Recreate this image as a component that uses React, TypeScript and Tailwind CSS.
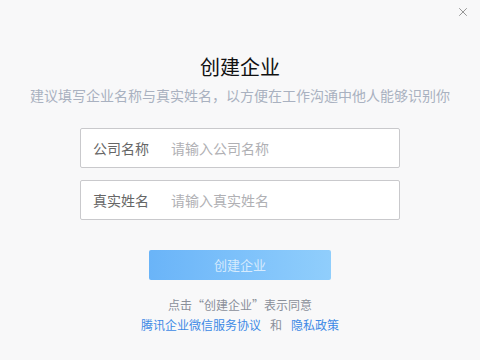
import { X } from 'lucide-react';

const font = "font-['Microsoft_YaHei','Noto_Sans_CJK_SC',sans-serif]";

function Field({ label, placeholder }: { label: string; placeholder: string }) {
  return (
    <label className="flex h-[40px] w-[320px] items-center rounded-[2px] border border-[#c9c9cc] bg-white">
      <span className="w-[90px] shrink-0 pl-[12px] text-[14px] text-[#666]">{label}</span>
      <input
        className="h-full min-w-0 flex-1 bg-transparent text-[14px] text-[#333] outline-none placeholder:text-[#b0b0b4]"
        placeholder={placeholder}
      />
    </label>
  );
}

export default function App() {
  return (
    <div className={`relative flex h-[360px] w-[480px] flex-col items-center bg-[#f8f8f9] ${font}`}>
      <button className="absolute right-[10px] top-[5px] text-[#888]" type="button">
        <X className="h-[14px] w-[14px]" strokeWidth={1.5} />
      </button>

      <h1 className="mt-[53px] text-[20px] leading-[28px] text-[#111]">创建企业</h1>
      <p className="mt-[4px] text-[14px] leading-[20px] text-[#a9b1c0]">
        建议填写企业名称与真实姓名，以方便在工作沟通中他人能够识别你
      </p>

      <div className="mt-[23px] flex flex-col gap-[12px]">
        <Field label="公司名称" placeholder="请输入公司名称" />
        <Field label="真实姓名" placeholder="请输入真实姓名" />
      </div>

      <button
        className="mt-[30px] h-[30px] w-[182px] rounded-[2px] bg-gradient-to-r from-[#6ab4f8] to-[#90cefc] text-[13px] text-white/70"
        disabled
        type="button"
      >
        创建企业
      </button>

      <p className="mt-[16px] text-[12px] leading-[18px] text-[#8a8f99]">点击“创建企业”表示同意</p>
      <p className="mt-[2px] text-[12px] leading-[18px]">
        <a className="text-[#3d8ae6]" href="#">腾讯企业微信服务协议</a>
        <span className="mx-[9px] text-[#8a8f99]">和</span>
        <a className="text-[#3d8ae6]" href="#">隐私政策</a>
      </p>
    </div>
  );
}
